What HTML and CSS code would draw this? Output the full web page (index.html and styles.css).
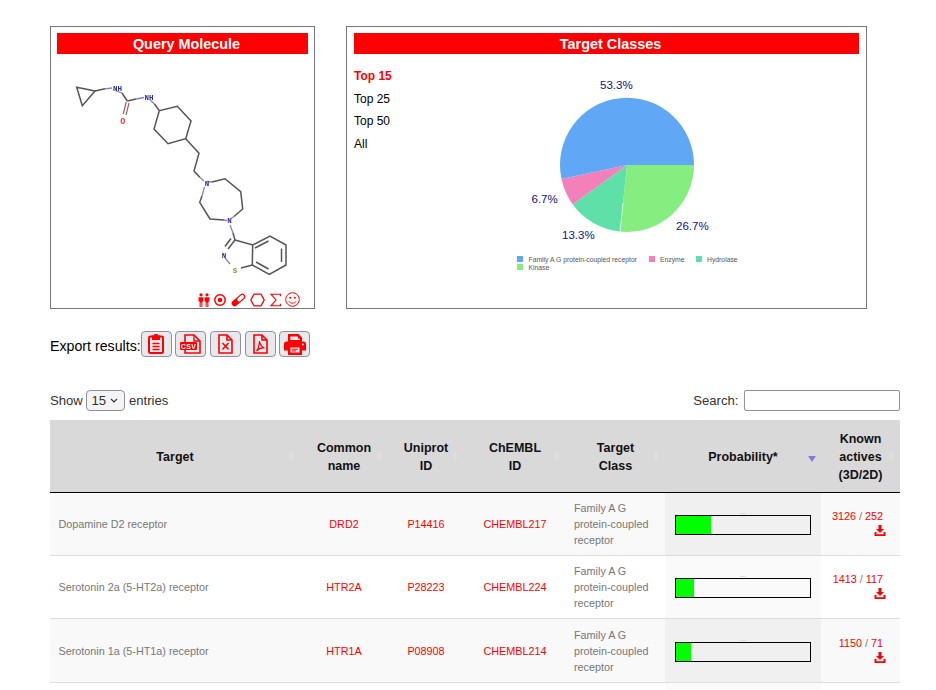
FILE: index.html
```html
<!DOCTYPE html>
<html>
<head>
  <meta charset="UTF-8">
  <title>Target prediction results</title>
  <link rel="stylesheet" href="styles.css">
</head>
<body>

  <!-- Top panels -->
  <div class="top-row">
    <div class="panel query-panel">
      <div class="panel-title">Query Molecule</div>
      <svg class="molecule" viewBox="57 54 251 236" width="251" height="236">
        <g class="bond">
          <polygon points="76.7,87.3 82.3,105.7 95,91"/>
          <line x1="95" y1="91" x2="105" y2="88.8"/>
          <line x1="122" y1="93" x2="127.3" y2="101"/>
          <line x1="127.3" y1="101" x2="136" y2="99"/>
          <polyline points="154.5,104 159.3,110.7 177.3,106.3 191,121 185.7,138.7 168,143.7 154,129 159.3,110.7"/>
          <polyline points="185.7,138.7 199,153.3 194,171 200,177.5"/>
          <polyline points="212,182 225,178.7 240.7,191.7 242.7,209 234,216.5"/>
          <polyline points="224,220 210,219 199.7,202.3 202,196"/>
          <line x1="233" y1="233" x2="235" y2="240"/>
          <polyline points="235,240 252.7,245 270,236 286,245 286,265 269.3,274.3 252.3,265 252.7,245"/>
          <line x1="252.3" y1="265" x2="241" y2="268"/>
          <line x1="255" y1="248" x2="268.5" y2="241"/>
          <line x1="281.5" y1="248.5" x2="281.5" y2="262"/>
          <line x1="256" y1="262" x2="268.5" y2="269"/>
          <line x1="235" y1="240" x2="228" y2="249"/>
          <line x1="231" y1="238.5" x2="225" y2="246.5"/>
        </g>
        <g class="bond-o">
          <line x1="126.2" y1="102" x2="123.2" y2="114"/>
          <line x1="129" y1="103" x2="126" y2="115"/>
        </g>
        <g class="bond-n">
          <line x1="105" y1="88.8" x2="112" y2="88"/>
          <line x1="116" y1="91" x2="122" y2="93"/>
          <line x1="136" y1="99" x2="144" y2="97.5"/>
          <line x1="150" y1="100" x2="154.5" y2="104"/>
          <line x1="200" y1="177.5" x2="204" y2="181"/>
          <line x1="207" y1="181.5" x2="212" y2="182"/>
          <line x1="204.5" y1="187" x2="202" y2="196"/>
          <line x1="234" y1="216.5" x2="231" y2="218.5"/>
          <line x1="224" y1="220" x2="227" y2="220.5"/>
          <line x1="230" y1="225" x2="233" y2="233"/>
          <line x1="225" y1="258" x2="230" y2="264"/>
        </g>
        <text class="atom atom-n" x="117.5" y="90.5">NH</text>
        <text class="atom atom-n" x="149" y="99.5">NH</text>
        <text class="atom atom-o" x="122.7" y="123.5">O</text>
        <text class="atom atom-n" x="207" y="185.5">N</text>
        <text class="atom atom-n" x="229.5" y="223">N</text>
        <text class="atom atom-n" x="224" y="257.5">N</text>
        <text class="atom atom-s" x="235" y="273">S</text>
      </svg>
      <div class="mol-icons">
        <svg width="12" height="14" viewBox="0 0 12 14"><g class="fill"><circle cx="3" cy="1.8" r="1.6"/><circle cx="9" cy="1.8" r="1.6"/><path d="M.6 4.2h4.800v4.300h-1V14H3.300V9.500h-.6V14H1.600V8.500h-1zM6.600 4.200h4.800v4.300h-1V14H9.300V9.500h-.6V14H7.600V8.500h-1z"/></g></svg>
        <svg width="12" height="14" viewBox="0 0 12 14"><circle class="line" cx="6" cy="7" r="5.2" stroke-width="1.5"/><circle class="fill" cx="6" cy="7" r="2.3"/></svg>
        <svg width="15" height="14" viewBox="0 0 15 14"><line class="pill-body" x1="3.7" y1="10.3" x2="11.3" y2="3.7"/><line class="pill-gap" x1="8" y1="6.6" x2="11.3" y2="3.7"/></svg>
        <svg width="15" height="14" viewBox="0 0 15 14"><polygon class="line" points="4,1.2 11,1.2 14.2,7 11,12.8 4,12.8 .8,7" stroke-width="1.3"/></svg>
        <svg width="11" height="14" viewBox="0 0 11 14"><polyline class="line" points="10.4,3.2 10.4,1.2 1,1.2 6,7 1,12.8 10.4,12.8 10.4,10.8" stroke-width="1.1"/></svg>
        <svg width="15" height="15" viewBox="0 0 15 15"><circle class="line" cx="7.5" cy="7.5" r="6.8" stroke-width="1"/><circle class="fill" cx="5.2" cy="5.8" r="1"/><circle class="fill" cx="9.8" cy="5.8" r="1"/><path class="line" d="M4 9.4c1.6 2.4 5.4 2.4 7 0" stroke-width="1"/></svg>
      </div>
    </div>

    <div class="panel classes-panel">
      <div class="panel-title">Target Classes</div>
      <div class="classes-body">
        <ul class="top-menu">
          <li class="active">Top 15</li>
          <li>Top 25</li>
          <li>Top 50</li>
          <li>All</li>
        </ul>
        <svg class="pie" viewBox="500 70 260 210" width="260" height="210">
          <path fill="#86ee80" d="M627 165H694A67 67 0 0 1 620 231.6z"/>
          <path fill="#5ee0a8" d="M627 165 620 231.6A67 67 0 0 1 572.8 204.4z"/>
          <path fill="#f480ba" d="M627 165 572.8 204.4A67 67 0 0 1 561.5 178.9z"/>
          <path fill="#60a8f5" d="M627 165 561.5 178.9A67 67 0 1 1 694 165z"/>
          <line x1="623" y1="203" x2="620" y2="231.6" stroke="#fff" stroke-width=".6"/>
          <text class="pie-label" x="600" y="88.5">53.3%</text>
          <text class="pie-label" x="676" y="230">26.7%</text>
          <text class="pie-label" x="562" y="239">13.3%</text>
          <text class="pie-label" x="531.5" y="202.5">6.7%</text>
          <rect x="517" y="256" width="6" height="6" fill="#60a8f5"/>
          <text class="pie-legend" x="528.5" y="261.5">Family A G protein-coupled receptor</text>
          <rect x="649" y="256" width="6" height="6" fill="#f480ba"/>
          <text class="pie-legend" x="660" y="261.5">Enzyme</text>
          <rect x="696" y="256" width="6" height="6" fill="#5ee0a8"/>
          <text class="pie-legend" x="707" y="261.5">Hydrolase</text>
          <rect x="517" y="264" width="6" height="6" fill="#86ee80"/>
          <text class="pie-legend" x="528.5" y="270">Kinase</text>
        </svg>
      </div>
    </div>
  </div>

  <!-- Export buttons -->
  <div class="export-row">
    <span class="export-label">Export results:</span>
    <div class="export-buttons">
      <button class="export-btn">
        <svg width="16" height="20" viewBox="0 0 16 20"><rect class="line" x="1" y="2.5" width="14" height="16.5" rx="1.5" stroke-width="2"/><path class="fill" d="M4 1.500h2a2 2 0 0 1 4 0h2V6H4z"/><path class="line" d="M4.500 9.500h7M4.500 12.500h7M4.500 15.500h7" stroke-width="1.6"/></svg>
      </button>
      <button class="export-btn">
        <svg width="21" height="20" viewBox="0 0 21 20"><path class="line" d="M5 8V1h9l6 6v12H5v-3" stroke-width="1.6"/><path class="line" d="M14 1v6h6" stroke-width="1.3"/><rect class="fill" x="0" y="8" width="17" height="8" rx="1"/><text class="csv-text" x="8.5" y="14.6">CSV</text></svg>
      </button>
      <button class="export-btn">
        <svg width="15" height="20" viewBox="0 0 15 20"><path class="line" d="M1 1h8l5 5v13H1zM9 1v5h5" stroke-width="1.6"/><path class="line" d="M4.500 9l6 6.500M10.500 9l-6 6.500" stroke-width="1.5"/></svg>
      </button>
      <button class="export-btn">
        <svg width="15" height="20" viewBox="0 0 15 20"><path class="line" d="M1 1h8l5 5v13H1zM9 1v5h5" stroke-width="1.6"/><path class="line" d="M6.500 7c.4 3.400 1.400 5.600 5 7-3.400-.4-5.600.4-8 3.200 2-2.800 2.800-6.400 3-10.200z" stroke-width="1.2"/></svg>
      </button>
      <button class="export-btn">
        <svg width="22" height="21" viewBox="0 0 22 21"><path class="fill" d="M4 0h10.500L18 3.500V8H4zM0 10a2.500 2.500 0 0 1 2.500-2.500h17A2.500 2.500 0 0 1 22 10v6.500h-4V21H4v-4.500H0z"/><path class="btn-cut" d="M6.300 6h9.400V4.500H14V2.500H6.300zM6.500 13.500h9v5h-9z"/><path class="line" d="M8 15.200h6M8 16.900h4" stroke-width="1"/><circle class="btn-cut" cx="18.8" cy="10.500" r="1"/></svg>
      </button>
    </div>
  </div>

  <!-- Table controls -->
  <div class="table-controls">
    <label>Show
      <select>
        <option>15</option>
        <option>25</option>
        <option>50</option>
      </select>
      entries</label>
    <label>Search: <input type="search"></label>
  </div>

  <table class="results">
    <colgroup>
      <col class="c-target"><col class="c-common"><col class="c-uniprot"><col class="c-chembl"><col class="c-class"><col class="c-prob"><col class="c-known">
    </colgroup>
    <thead>
      <tr>
        <th>Target<span class="sort"></span></th>
        <th>Common<br>name<span class="sort"></span></th>
        <th>Uniprot<br>ID<span class="sort"></span></th>
        <th>ChEMBL<br>ID<span class="sort"></span></th>
        <th>Target<br>Class<span class="sort"></span></th>
        <th>Probability*<span class="sort-desc"></span></th>
        <th>Known<br>actives<br>(3D/2D)<span class="sort"></span></th>
      </tr>
    </thead>
    <tbody>
      <tr>
        <td>Dopamine D2 receptor</td>
        <td class="center link">DRD2</td>
        <td class="center link">P14416</td>
        <td class="center link">CHEMBL217</td>
        <td>Family A G protein-coupled receptor</td>
        <td class="prob"><div class="prob-mark"></div><div class="prob-bar"><div class="prob-fill" style="width: 35px"></div></div></td>
        <td class="known"><span class="link">3126</span> / <span class="link">252</span><svg class="dl" width="12" height="11" viewBox="0 0 12 11"><path class="fill" d="M4.500 0h3v4H10L6 8 2 4h2.500z"/><path class="fill" d="M.5 7h2v2.300h7V7h2v4H.5z"/></svg></td>
      </tr>
      <tr>
        <td>Serotonin 2a (5-HT2a) receptor</td>
        <td class="center link">HTR2A</td>
        <td class="center link">P28223</td>
        <td class="center link">CHEMBL224</td>
        <td>Family A G protein-coupled receptor</td>
        <td class="prob"><div class="prob-mark"></div><div class="prob-bar"><div class="prob-fill" style="width: 18px"></div></div></td>
        <td class="known"><span class="link">1413</span> / <span class="link">117</span><svg class="dl" width="12" height="11" viewBox="0 0 12 11"><path class="fill" d="M4.500 0h3v4H10L6 8 2 4h2.500z"/><path class="fill" d="M.5 7h2v2.300h7V7h2v4H.5z"/></svg></td>
      </tr>
      <tr class="tall-row">
        <td>Serotonin 1a (5-HT1a) receptor</td>
        <td class="center link">HTR1A</td>
        <td class="center link">P08908</td>
        <td class="center link">CHEMBL214</td>
        <td>Family A G protein-coupled receptor</td>
        <td class="prob"><div class="prob-mark"></div><div class="prob-bar"><div class="prob-fill" style="width: 15px"></div></div></td>
        <td class="known"><span class="link">1150</span> / <span class="link">71</span><svg class="dl" width="12" height="11" viewBox="0 0 12 11"><path class="fill" d="M4.500 0h3v4H10L6 8 2 4h2.500z"/><path class="fill" d="M.5 7h2v2.300h7V7h2v4H.5z"/></svg></td>
      </tr>
      <tr>
        <td></td><td></td><td></td><td></td><td></td><td class="prob"></td><td></td>
      </tr>
    </tbody>
  </table>

</body>
</html>
```

FILE: styles.css
```css
* {
  box-sizing: border-box;
}

html, body {
  margin: 0;
  padding: 0;
  height: 100%;
  overflow: hidden;
  background: white;
  font-family: "Liberation Sans", Arial, sans-serif;
  color: #333;
}

body {
  padding: 26px 36px 0 50px;
}

/* Top panels */
.top-row {
  display: flex;
  gap: 31px;
}

.panel {
  height: 283px;
  border: 1px solid #777;
  padding: 6px;
}

.query-panel {
  width: 265px;
}

.classes-panel {
  width: 521px;
  padding: 6px 7px;
}

.panel-title {
  height: 21px;
  line-height: 22px;
  padding-left: 8px;
  background: red;
  color: white;
  font-size: 14.4px;
  font-weight: bold;
  text-align: center;
}

.molecule {
  display: block;
  filter: blur(0.3px);
}

.bond line, .bond polyline, .bond polygon {
  fill: none;
  stroke: #555;
  stroke-width: 1.5;
}

.bond-n line {
  stroke: #8080c8;
  stroke-width: 1.3;
}

.bond-o line {
  stroke: #a06060;
  stroke-width: 1.2;
}

.atom {
  font-family: "Liberation Mono", monospace;
  font-size: 7.5px;
  font-weight: bold;
  text-anchor: middle;
}

.atom-n { fill: #2f2f98; }
.atom-o { fill: #f03a3a; font-size: 8.5px; }
.atom-s { fill: #8c8c30; }

.fill {
  fill: red;
}

.line {
  fill: none;
  stroke: red;
}

.pill-body, .pill-gap {
  stroke-linecap: round;
}

.pill-body {
  stroke: red;
  stroke-width: 6;
}

.pill-gap {
  stroke: white;
  stroke-width: 3.6;
}

.mol-icons {
  display: flex;
  justify-content: flex-end;
  align-items: center;
  gap: 4.4px;
  margin-top: 2px;
  padding-right: 8px;
}

.mol-icons svg {
  display: block;
}

/* Classes panel */
.classes-body {
  display: flex;
  justify-content: space-between;
}

.top-menu {
  list-style: none;
  margin: 0;
  padding: 11px 0 0;
  font-size: 12px;
  line-height: 22.5px;
  color: #000;
}

.top-menu .active {
  color: red;
  font-weight: bold;
}

.pie {
  display: block;
  margin: 16px 99px 0 0;
  overflow: visible;
}

.pie-label {
  font-size: 11.5px;
  fill: #101080;
}

.pie-legend {
  font-size: 6.8px;
  fill: #555;
}

/* Export */
.export-row {
  display: flex;
  align-items: center;
  margin-top: 22px;
  height: 26px;
}

.export-label {
  position: relative;
  top: 2px;
  font-size: 14.2px;
  color: #000;
}

.export-buttons {
  display: flex;
  gap: 3.7px;
}

.export-btn {
  display: flex;
  align-items: center;
  justify-content: center;
  width: 31px;
  height: 26px;
  padding: 0;
  background: #e9e9ed;
  border: 1px solid #8f8f9d;
  border-radius: 4px;
}

.btn-cut {
  fill: #e9e9ed;
}

.csv-text {
  fill: white;
  font-family: "Liberation Sans", Arial, sans-serif;
  font-size: 7px;
  font-weight: bold;
  letter-spacing: 0.4px;
  text-anchor: middle;
}

/* Table controls */
.table-controls {
  display: flex;
  justify-content: space-between;
  align-items: center;
  margin-top: 33px;
  height: 21px;
  font-size: 13.1px;
}

.table-controls select {
  width: 39px;
  height: 21px;
  padding: 0 0 0 4px;
  appearance: none;
  background: #f4f4f6 url("data:image/svg+xml,%3Csvg xmlns='http://www.w3.org/2000/svg' width='8' height='5'%3E%3Cpath d='M1 1l3 3 3-3' fill='none' stroke='%23333' stroke-width='1.200'/%3E%3C/svg%3E") no-repeat right 6px center;
  border: 1px solid #8f8f9d;
  border-radius: 4px;
  color: #333;
  font-family: inherit;
  font-size: 13.1px;
}

.table-controls input {
  width: 156px;
  height: 21px;
  margin-left: 2px;
  padding: 0 4px;
  border: 1px solid #8f8f9d;
  border-radius: 2px;
}

/* Results table */
.results {
  width: 850px;
  margin-top: 9px;
  table-layout: fixed;
  border-collapse: collapse;
  font-size: 10.8px;
  line-height: 16px;
  color: #777;
}

.c-target { width: 250px; }
.c-common { width: 88px; }
.c-uniprot { width: 76px; }
.c-chembl { width: 102px; }
.c-class { width: 99px; }
.c-prob { width: 156px; }
.c-known { width: 79px; }

.results th {
  position: relative;
  height: 72px;
  padding: 10px 4px 8px;
  background: #d9d9d9;
  border-bottom: 1px solid black;
  color: #111;
  font-size: 12.5px;
  line-height: 18px;
  text-align: center;
}

.results td {
  height: 63px;
  padding: 7px 8px;
  border-bottom: 1px solid #ddd;
}

.results td:first-child {
  padding-left: 8.5px;
}

.results tr.tall-row td {
  height: 64px;
}

.results tbody tr:nth-child(odd) td {
  background: #f9f9f9;
}

.results tbody tr:nth-child(odd) td.prob {
  background: #f0f0f0;
}

.results tbody tr:nth-child(even) td.prob {
  background: #fafafa;
}

.center {
  text-align: center;
}

.link {
  color: red;
}

/* sort arrows in the header */
.sort, .sort-desc {
  position: absolute;
  right: 6px;
  top: 50%;
}

.sort::before, .sort::after {
  content: "";
  position: absolute;
  right: 0;
  border-left: 3px solid transparent;
  border-right: 3px solid transparent;
}

.sort::before {
  bottom: 0;
  border-bottom: 5px solid #dedede;
}

.sort::after {
  top: 0;
  border-top: 5px solid #dedede;
}

.sort-desc {
  right: 5px;
  border-left: 4px solid transparent;
  border-right: 4px solid transparent;
  border-top: 6px solid #7d7dd8;
}

.results td.prob {
  padding: 0 10px;
}

.prob-mark {
  width: 6px;
  height: 1px;
  margin: 0 auto 1px;
  background: #dcdcdc;
}

.prob-bar {
  height: 20px;
  border: 1px solid black;
}

.prob-fill {
  height: 100%;
  background: #0f0;
}

.results td.known {
  padding: 7px 17px 11px 4px;
  text-align: right;
}

.dl {
  display: block;
  margin: 1px -3px 0 auto;
}
```
